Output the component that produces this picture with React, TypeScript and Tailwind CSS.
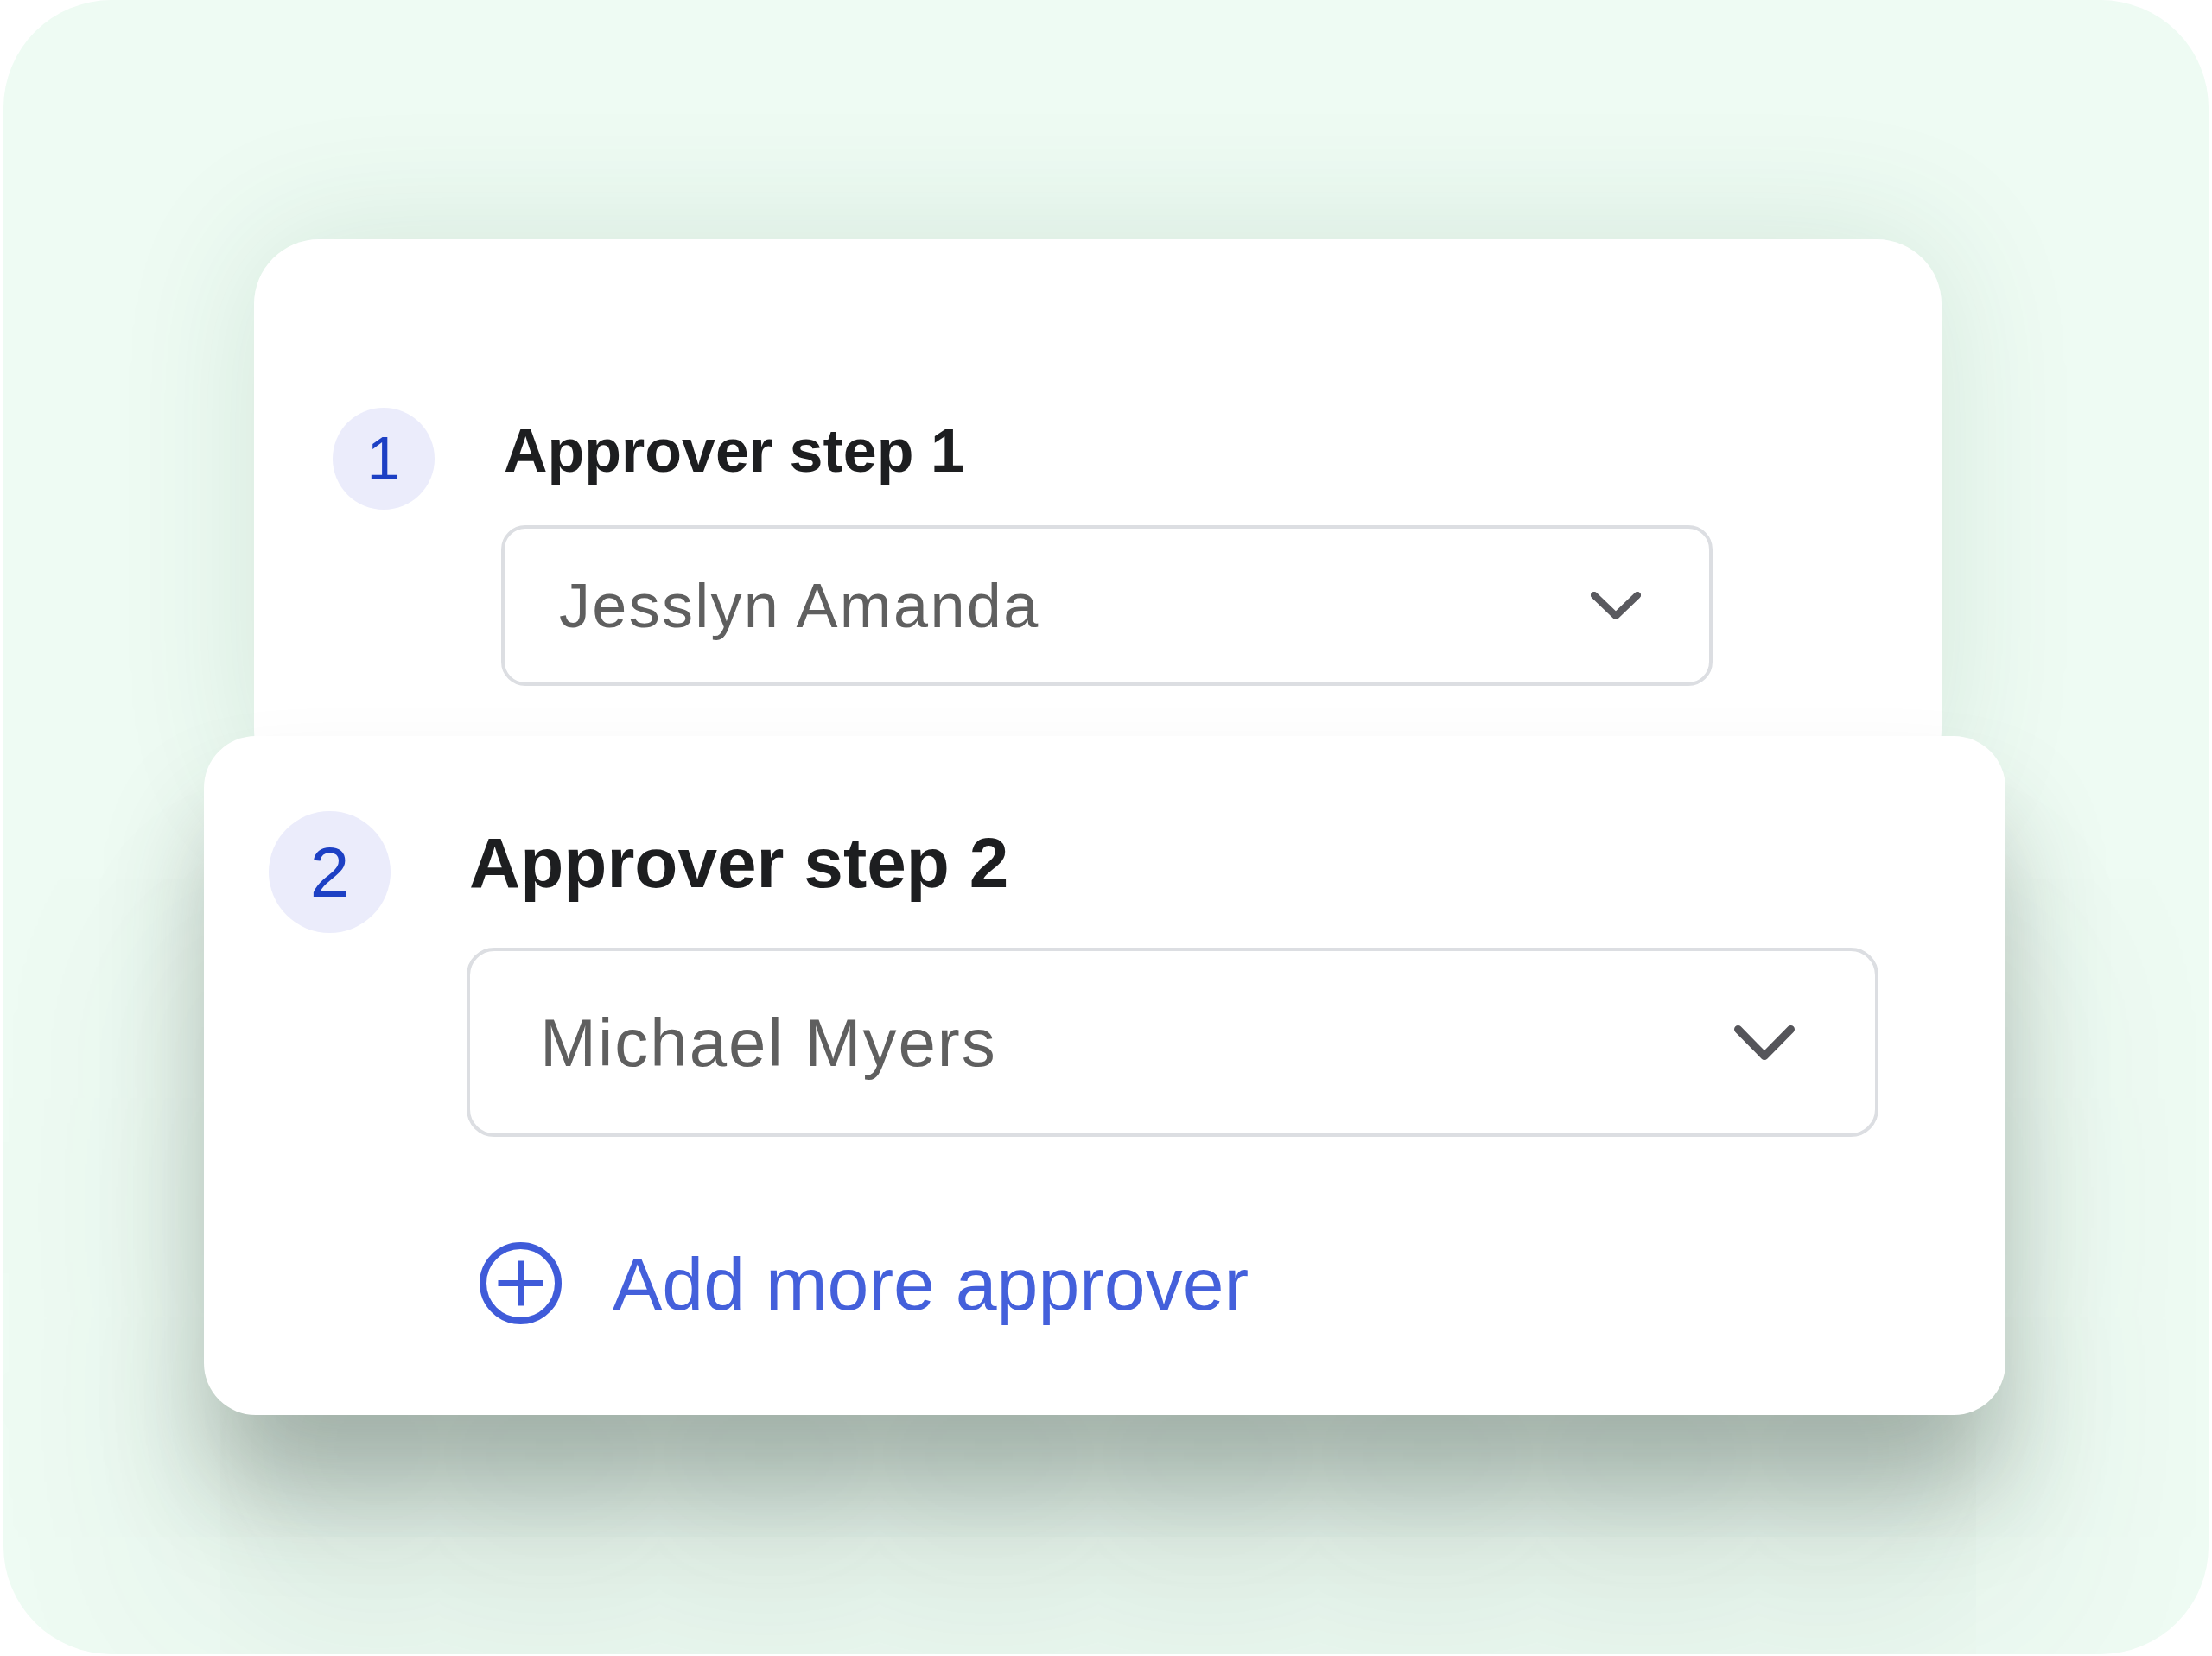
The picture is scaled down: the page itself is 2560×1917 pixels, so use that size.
import React from "react";

function Chevron({ w, h, s, color }: { w: number; h: number; s: number; color: string }) {
  const half = s / 2;
  return (
    <svg width={w} height={h} viewBox={`0 0 ${w} ${h}`} className="shrink-0">
      <polyline
        points={`${half},${half} ${w / 2},${h - half} ${w - half},${half}`}
        fill="none"
        stroke={color}
        strokeWidth={s}
        strokeLinecap="round"
        strokeLinejoin="round"
      />
    </svg>
  );
}

function AddIcon() {
  return (
    <svg width="95" height="95" viewBox="0 0 95 95" className="shrink-0">
      <circle cx="47.5" cy="47.5" r="43.5" fill="none" stroke="#3f5bd9" strokeWidth="8" />
      <line x1="21.5" y1="47.5" x2="73.5" y2="47.5" stroke="#3f5bd9" strokeWidth="7" />
      <line x1="47.5" y1="21.5" x2="47.5" y2="73.5" stroke="#3f5bd9" strokeWidth="7" />
    </svg>
  );
}

export default function App() {
  return (
    <div
      className="w-[2560px] h-[1917px] bg-white px-[4px] pb-[2px]"
      style={{ fontFamily: '"Liberation Sans", Arial, sans-serif' }}
    >
      <div className="h-[1915px] rounded-[125px] bg-[#eefbf3] overflow-hidden pt-[277px] flex flex-col">
        {/* Card 1 */}
        <div className="ml-[290px] w-[1953px] bg-white rounded-[75px] pt-[195px] pl-[91px] pb-[126px] flex items-start shadow-[0_0_160px_rgba(40,90,60,0.13)]">
          <div className="w-[118px] h-[118px] shrink-0 rounded-full bg-[#ebecfb] flex items-center justify-center text-[70px] leading-none text-[#1d40c4]">
            1
          </div>
          <div className="ml-[80px] flex flex-col">
            <div className="mt-[15px] text-[70px] font-bold leading-none text-[#1d1e20]">
              Approver step 1
            </div>
            <div className="-ml-[3px] mt-[51px] w-[1402px] h-[186px] border-4 border-[#dcdee2] rounded-[28px] flex items-center justify-between pl-[63px] pr-[79px]">
              <span className="text-[72px] leading-none tracking-[2.3px] text-[#5f5f5f]">Jesslyn Amanda</span>
              <Chevron w={58} h={32} s={8} color="#5a5a5f" />
            </div>
          </div>
        </div>

        {/* Card 2 */}
        <div className="relative -mt-[68px] ml-[232px] w-[2085px] h-[786px] bg-white rounded-[60px] pt-[87px] pl-[75px] flex items-start shadow-[0_90px_120px_-10px_rgba(50,65,55,0.34),0_220px_260px_rgba(50,75,60,0.13)]">
          <div className="w-[141px] h-[141px] shrink-0 rounded-full bg-[#ebecfb] flex items-center justify-center text-[82px] leading-none text-[#1d40c4]">
            2
          </div>
          <div className="ml-[88px] flex flex-col">
            <div className="mt-[19px] ml-[3px] text-[82px] font-bold leading-none text-[#1d1e20]">
              Approver step 2
            </div>
            <div className="mt-[57px] w-[1634px] h-[219px] border-4 border-[#dcdee2] rounded-[32px] flex items-center justify-between pl-[81px] pr-[93px]">
              <span className="text-[78px] leading-none tracking-[2px] text-[#5f5f5f]">Michael Myers</span>
              <Chevron w={70} h={40} s={9} color="#55555a" />
            </div>
            <div className="mt-[122px] ml-[15px] flex items-center gap-[59px]">
              <AddIcon />
              <span className="text-[86px] leading-none text-[#4460db]">Add more approver</span>
            </div>
          </div>
        </div>
      </div>
    </div>
  );
}
